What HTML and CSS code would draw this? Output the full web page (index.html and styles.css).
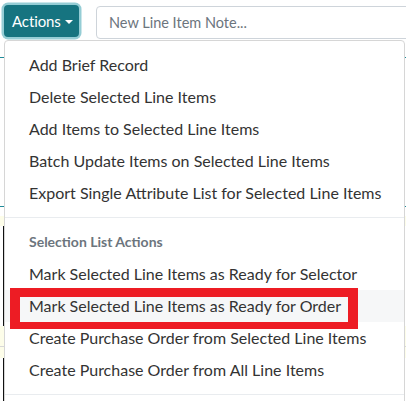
FILE: index.html
```html
<!DOCTYPE html>
<html>
<head>
<meta charset="utf-8">
<link rel="stylesheet" href="styles.css">
</head>
<body>
<div class="page">
  <div class="toolbar">
    <button class="btn-actions">Actions<span class="caret"></span></button>
    <input class="note-input" type="text" placeholder="New Line Item Note...">
  </div>
  <div class="sheet">
    <div class="row row-head"></div>
    <div class="row row-body"></div>
    <div class="row row-gap"></div>
    <div class="row row-cream"></div>
    <div class="row row-mark"></div>
    <div class="row row-cream2"></div>
    <div class="row row-cream3"></div>
    <div class="row row-mark2"></div>
  </div>
  <div class="dropdown-menu">
    <a class="dropdown-item">Add Brief Record</a>
    <a class="dropdown-item">Delete Selected Line Items</a>
    <a class="dropdown-item">Add Items to Selected Line Items</a>
    <a class="dropdown-item">Batch Update Items on Selected Line Items</a>
    <a class="dropdown-item">Export Single Attribute List for Selected Line Items</a>
    <div class="dropdown-divider"></div>
    <div class="dropdown-header">Selection List Actions</div>
    <a class="dropdown-item">Mark Selected Line Items as Ready for Selector</a>
    <a class="dropdown-item active">Mark Selected Line Items as Ready for Order<span class="highlight-box"></span></a>
    <a class="dropdown-item">Create Purchase Order from Selected Line Items</a>
    <a class="dropdown-item">Create Purchase Order from All Line Items</a>
    <div class="dropdown-divider"></div>
  </div>
</div>
</body>
</html>
```
FILE: styles.css
```css
html, body {
  margin: 0;
  padding: 0;
  background: #fff;
  overflow: hidden;
}
body {
  font-family: Lato, "Liberation Sans", sans-serif;
  font-size: 16px;
  color: #333;
}
.page {
  position: relative;
  width: 406px;
  height: 401px;
  overflow: hidden;
}
.toolbar {
  display: flex;
  align-items: flex-start;
  height: 39px;
  padding: 5px 0 0 4px;
  box-sizing: border-box;
}
.btn-actions {
  flex: none;
  display: flex;
  align-items: center;
  height: 32px;
  width: 75px;
  padding: 0 0 0 8px;
  border: none;
  border-radius: 4px;
  background: #167480;
  color: #fff;
  font-family: inherit;
  font-size: 15px;
  letter-spacing: -0.1px;
  box-shadow: 0 0 0 2.5px #95cdd5;
  box-sizing: border-box;
}
.caret {
  display: inline-block;
  margin-left: 4px;
  margin-top: 1px;
  border-left: 4px solid transparent;
  border-right: 4px solid transparent;
  border-top: 4.5px solid #fff;
}
.note-input {
  flex: none;
  margin: 1px 0 0 17px;
  height: 33px;
  width: 330px;
  padding: 0 12px;
  border: 1px solid #ced4da;
  border-radius: 4px;
  font-family: inherit;
  font-size: 14.5px;
  color: #495057;
  box-sizing: border-box;
}
.note-input::placeholder {
  color: #6c757d;
}
.sheet {
  display: flex;
  flex-direction: column;
}
.row-head { height: 18px; border-bottom: 1px solid #1f8a98; }
.row-body { height: 148px; border-bottom: 1px solid #1f8a98; }
.row-gap { height: 9px; }
.row-cream { height: 10px; background: #fdfde9; }
.row-mark { height: 100px; margin-left: 3px; border-left: 1px solid #111; }
.row-cream2 { height: 20px; background: #fdfde9; border-bottom: 1px solid #d8d8d8; }
.row-cream3 { height: 11px; background: #fdfde9; }
.row-mark2 { height: 50px; margin-left: 3px; border-left: 1px solid #111; }
.dropdown-menu {
  position: absolute;
  top: 40px;
  left: 4px;
  width: 401px;
  box-sizing: border-box;
  padding: 8px 0;
  background: #fff;
  border: 1px solid #d6d6d6;
  border-radius: 4px;
}
.dropdown-item {
  display: block;
  position: relative;
  padding: 4px 24px;
  line-height: 24px;
  color: #333;
  white-space: nowrap;
}
.dropdown-item.active {
  background: #f6f7f8;
}
.dropdown-divider {
  margin: 8px 0;
  height: 0;
  border-top: 1px solid #e9ecef;
}
.dropdown-header {
  padding: 4px 24px;
  line-height: 24px;
  font-size: 14px;
  font-weight: 700;
  color: #6c757d;
  white-space: nowrap;
}
.highlight-box {
  position: absolute;
  top: -2px;
  left: 5px;
  width: 348px;
  height: 41px;
  box-sizing: border-box;
  border-style: solid;
  border-color: #ed1c24;
  border-width: 9px 10px 7px 10px;
}
```
